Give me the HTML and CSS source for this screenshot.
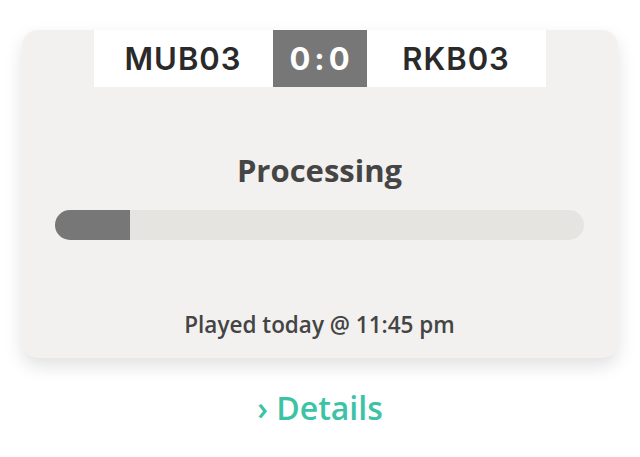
FILE: index.html
```html
<!DOCTYPE html>
<html lang="en">
<head>
    <meta charset="UTF-8">
    <meta name="viewport" content="width=device-width, initial-scale=1.0">
    <title>Match</title>
    <link rel="stylesheet" href="styles.css">
</head>
<body>
    <div class="card">
        <div class="scoreboard">
            <div class="team">MUB03</div>
            <div class="score">0:0</div>
            <div class="team">RKB03</div>
        </div>
        <h2 class="status">Processing</h2>
        <div class="progress">
            <div class="progress-fill" style="width: 14.2%"></div>
        </div>
        <p class="played">Played today @ 11:45 pm</p>
    </div>
    <a class="details" href="#">&rsaquo; Details</a>
</body>
</html>
```

FILE: styles.css
```css
body {
    margin: 0;
    background-color: #fff;
    font-family: "Open Sans", Arial, sans-serif;
}
.card {
    margin: 30px 0 0 22px;
    width: 596px;
    box-sizing: border-box;
    padding: 0 34px 20px 33px;
    background-color: #f2f1f0;
    border-radius: 16px;
    box-shadow: 0 8px 18px rgba(0, 0, 0, 0.12);
    display: flex;
    flex-direction: column;
    align-items: center;
}
.scoreboard {
    display: flex;
    height: 57px;
    width: 452px;
}
.team {
    flex: 0 0 179px;
    background: #fff;
    display: flex;
    align-items: center;
    justify-content: center;
    font-family: Inter, sans-serif;
    font-weight: 600;
    font-size: 31px;
    letter-spacing: 1px;
    color: #2a2a2a;
}
.score {
    flex: 0 0 94px;
    background: #777;
    color: #fff;
    display: flex;
    align-items: center;
    justify-content: center;
    font-family: Inter, sans-serif;
    font-weight: 700;
    font-size: 31px;
    letter-spacing: 4px;
    padding-left: 4px;
    box-sizing: border-box;
}
.status {
    margin: 64px 0 21px;
    font-size: 31px;
    line-height: 38px;
    font-weight: 700;
    color: #454545;
}
.progress {
    width: 100%;
    height: 30px;
    border-radius: 15px;
    background: #e5e4e1;
    overflow: hidden;
}
.progress-fill {
    height: 100%;
    background: #777;
}
.played {
    margin: 72px 0 0;
    font-size: 22.5px;
    line-height: 26px;
    font-weight: 600;
    color: #444;
}
.details {
    display: block;
    margin: 31px auto 0;
    text-align: center;
    width: 220px;
    font-size: 32px;
    line-height: 38px;
    font-weight: 600;
    color: #3cc3a6;
    text-decoration: none;
}
```
